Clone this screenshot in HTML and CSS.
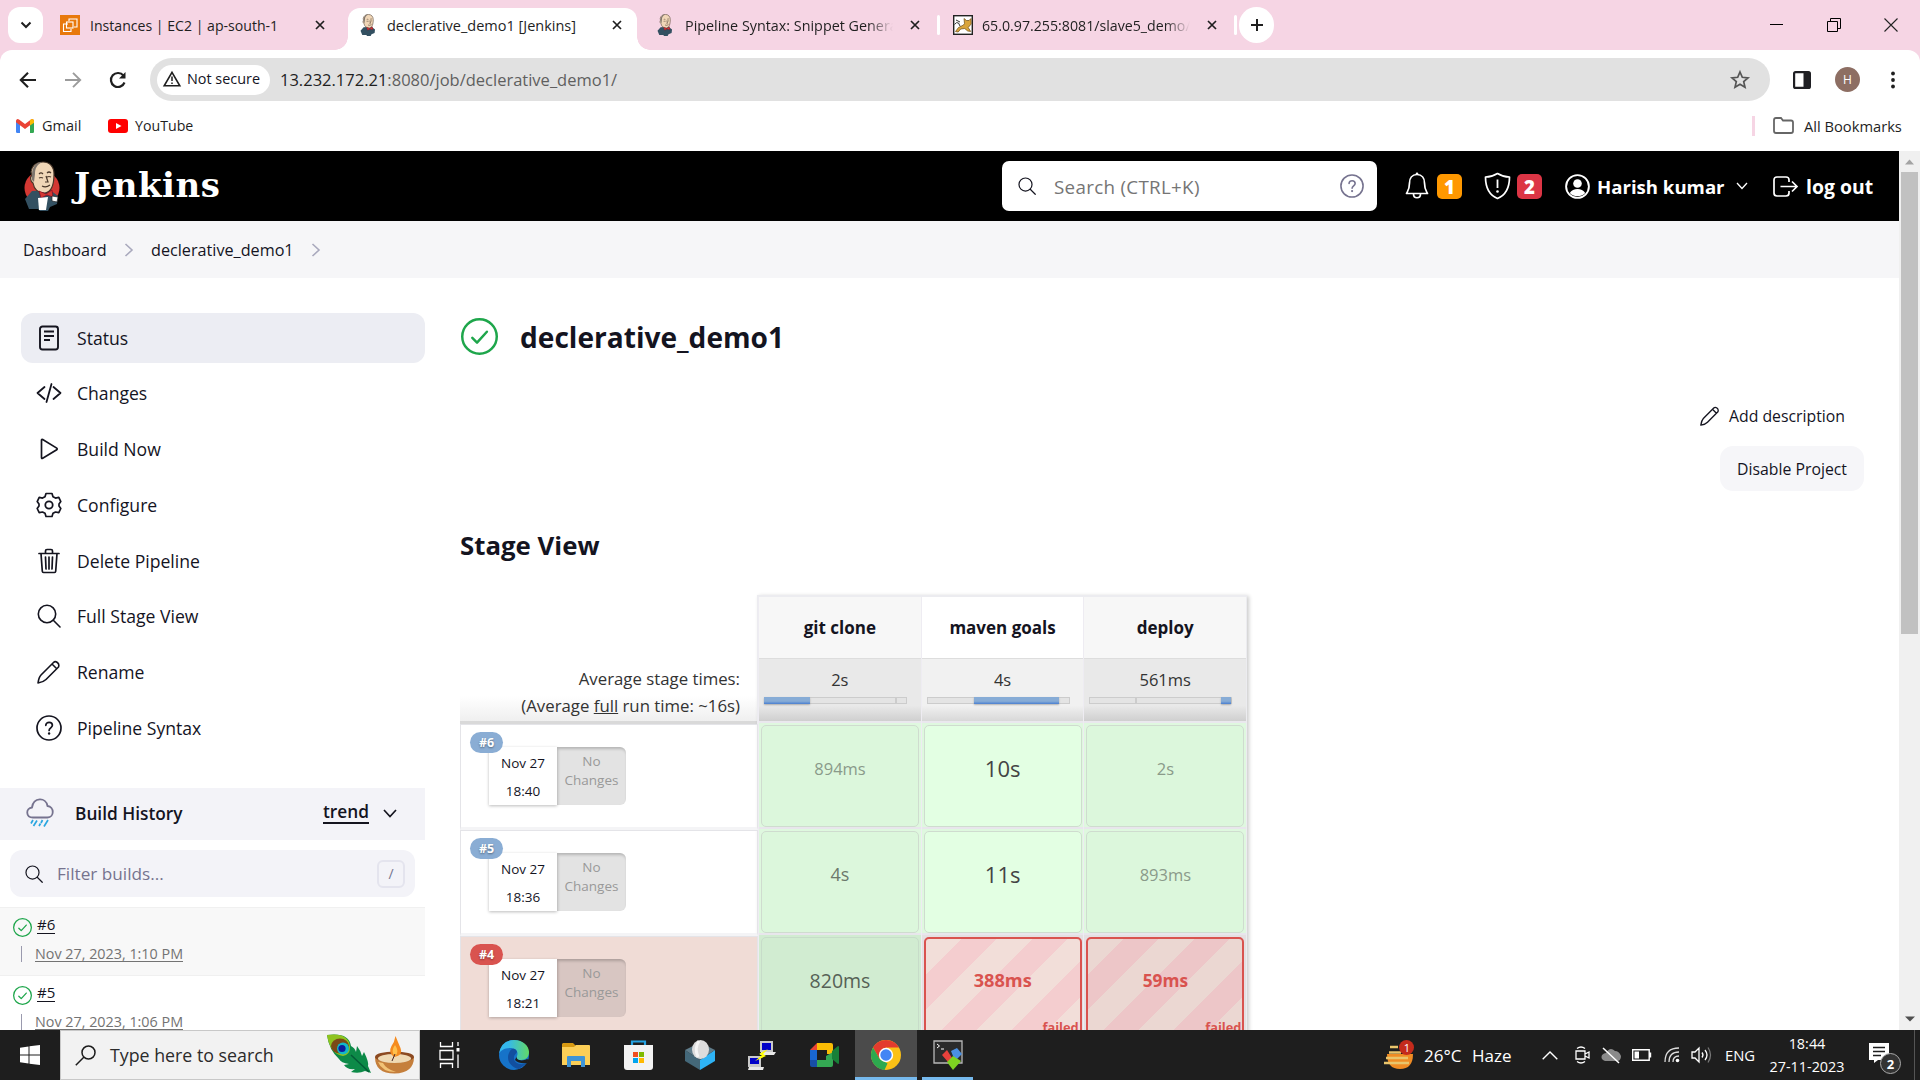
FILE: index.html
```html
<!DOCTYPE html>
<html lang="en">
<head>
<meta charset="utf-8">
<title>declerative_demo1 [Jenkins]</title>
<link rel="stylesheet" href="styles.css">
</head>
<body>
<svg class="defs" width="0" height="0">
  <defs>
    <symbol id="x" viewBox="0 0 10 10"><path d="M1 1l8 8M9 1l-8 8" fill="none" stroke="#1f1f1f" stroke-width="1.7"/></symbol>
    <symbol id="butler" viewBox="0 0 36 50">
      <path d="M8 30L1 38l4 10h9l2 2h8l2-4 7-3 1-8-8-6z" fill="#335061"/>
      <path d="M7 11C8 4 13 1 19 1c7 0 11 5 11 12 0 9-2 18-9 19-7 0-11-4-12-10-3-2-3-6-1-8z" fill="#f0d6b7" stroke="#49372a" stroke-width="1.2"/>
      <path d="M8 14C8 5 13 1 18 1c-5 3-7 6-7 12l-1 8-2-2z" fill="#7d756d"/>
      <path d="M15 13q2-2 4 0M23 12q2-2 4 0M15 17q2-1 4 0M23 16q2-1 4 0M22 15l2 6h-3M18 25q4 2 8-1" fill="none" stroke="#49372a" stroke-width="1.2"/>
      <path d="M15 30l7 3 6-4 1 7-6-2-6 3z" fill="#d33833" stroke="#81001c" stroke-width=".6"/>
    </symbol>
    <symbol id="check" viewBox="0 0 36 36"><circle cx="18" cy="18" r="16.8" fill="none" stroke="#1ea64b" stroke-width="2.4"/><path d="M11 19.300l4.600 4.700 9.600-10.600" fill="none" stroke="#1ea64b" stroke-width="2.400" stroke-linecap="round" stroke-linejoin="round"/></symbol>
    <symbol id="search" viewBox="0 0 24 24"><circle cx="10" cy="10" r="8.700" fill="none" stroke="#14141f" stroke-width="1.600"/><path d="M16.300 16.300L23 23" stroke="#14141f" stroke-width="1.600" stroke-linecap="round"/></symbol>
    <symbol id="pencil" viewBox="0 0 24 24"><path d="M1 23c.5-3.500 1-6 3-8L16.500 2.500c2-2 6.500.5 5 4.500L9 19.500c-2 2-4.500 3-8 3.500zM15 4l5 5" fill="none" stroke="#14141f" stroke-width="1.600" stroke-linejoin="round"/></symbol>
    <symbol id="help" viewBox="0 0 26 26"><circle cx="13" cy="13" r="12" fill="none" stroke="currentColor" stroke-width="1.700"/><path d="M9.800 10.300c0-4 6.600-4 6.600 0 0 2.400-3.300 2.700-3.300 5.100" fill="none" stroke="currentColor" stroke-width="1.700" stroke-linecap="round"/><circle cx="13.100" cy="18.500" r="1.200" fill="currentColor"/></symbol>
    <symbol id="chev" viewBox="0 0 10 14"><path d="M1.500 1l6.500 6-6.500 6" fill="none" stroke="#a9a9bd" stroke-width="1.600"/></symbol>
  </defs>
</svg>

<header class="tabs">
  <div class="tab-search"><svg width="12" height="8" viewBox="0 0 12 8"><path d="M1.500 1.500L6 6l4.500-4.500" fill="none" stroke="#1f1f1f" stroke-width="2"/></svg></div>
  <div class="tab tab-ec2">
    <svg width="20" height="20" viewBox="0 0 20 20"><rect width="20" height="20" fill="#e8790c"/><g fill="none" stroke="#fff" stroke-width="1.100"><rect x="6.500" y="7" width="6.500" height="6"/><path d="M9 6V4h8v8h-3M8 9H3.500v7.500H11V14"/></g></svg>
    <span class="title">Instances | EC2 | ap-south-1</span><svg class="x"><use href="#x"/></svg>
  </div>
  <div class="tab tab-active">
    <svg width="20" height="22" class="fav"><use href="#butler"/></svg>
    <span class="title">declerative_demo1 [Jenkins]</span><svg class="x"><use href="#x"/></svg>
  </div>
  <div class="tab tab-syntax">
    <svg width="20" height="22" class="fav"><use href="#butler"/></svg>
    <span class="title fade">Pipeline Syntax: Snippet Generator</span><svg class="x"><use href="#x"/></svg>
  </div>
  <i class="sep"></i>
  <div class="tab tab-tomcat">
    <svg width="20" height="20" viewBox="0 0 20 20"><rect x=".7" y=".7" width="18.600" height="18.600" fill="#fff" stroke="#222" stroke-width="1.400"/><path d="M2.500 16.500l3-4 5-2.500 1-1.500-.5-5 2.500 2h2.500l2-2 .2 5.500-3 3.500 2.500 4-3-.5-3-2.500-4 .5-2.500 3z" fill="#d9a43b" stroke="#6a4a15" stroke-width=".7"/><path d="M1.500 9.500q2-3 4-1.500l1.500 3M3 5l4 2" fill="none" stroke="#333"/></svg>
    <span class="title fade">65.0.97.255:8081/slave5_demo/</span><svg class="x"><use href="#x"/></svg>
  </div>
  <i class="sep"></i>
  <div class="new-tab"><svg width="14" height="14" viewBox="0 0 14 14"><path d="M7 1v12M1 7h12" stroke="#1f1f1f" stroke-width="2"/></svg></div>
  <div class="win">
    <svg width="14" height="14" viewBox="0 0 14 14"><path d="M0 6.500h13" stroke="#000" stroke-width="1"/></svg>
    <svg width="14" height="14" viewBox="0 0 14 14"><path d="M.5 3.500h10v10H.5zM3.500 3V.5h10v10H11" fill="none" stroke="#000"/></svg>
    <svg width="14" height="14" viewBox="0 0 14 14"><path d="M.5.500l13 13M13.500.500l-13 13" stroke="#222" stroke-width="1.100"/></svg>
  </div>
</header>

<div class="chrome">
  <div class="toolbar">
    <svg class="nav-i" viewBox="0 0 18 18"><path d="M17 9H2.500M9 1.800L1.800 9 9 16.200" fill="none" stroke="#1f1f1f" stroke-width="2.100"/></svg>
    <svg class="nav-i" viewBox="0 0 18 18"><path d="M1 9h14.500M9 1.800L16.200 9 9 16.200" fill="none" stroke="#9b9b9b" stroke-width="1.900"/></svg>
    <svg class="nav-i" viewBox="0 0 18 18"><path d="M15.500 11.500A7 7 0 1 1 14.500 4.700" fill="none" stroke="#1f1f1f" stroke-width="2.200"/><path d="M16.500 1v6.500H10z" fill="#1f1f1f"/></svg>
    <div class="omni">
      <div class="chip"><svg width="18" height="16" viewBox="0 0 18 16"><path d="M9 1.300L16.800 14.800H1.200z" fill="none" stroke="#1f1f1f" stroke-width="1.600"/><path d="M9 5.500v4.500M9 11.500V13" stroke="#1f1f1f" stroke-width="1.500"/></svg><span>Not secure</span></div>
      <span class="url">13.232.172.21<em>:8080/job/declerative_demo1/</em></span>
      <svg class="star" width="20" height="20" viewBox="0 0 20 20"><path d="M10 2l2.300 5.300 5.700.5-4.300 3.800 1.300 5.700-5-3-5 3 1.300-5.700L2 7.800l5.700-.5z" fill="none" stroke="#555" stroke-width="1.700"/></svg>
    </div>
    <svg class="panel" width="18" height="18" viewBox="0 0 18 18"><rect x="1.100" y="1.100" width="15.800" height="15.800" rx="1.500" fill="none" stroke="#1f1f23" stroke-width="2.200"/><path d="M10.500 1h6v16h-6z" fill="#1f1f23"/></svg>
    <div class="avatar">H</div>
    <svg width="4" height="18" viewBox="0 0 4 18"><g fill="#1f1f1f"><circle cx="2" cy="2.500" r="1.900"/><circle cx="2" cy="9" r="1.900"/><circle cx="2" cy="15.500" r="1.900"/></g></svg>
  </div>
  <div class="bookmarks">
    <svg width="18" height="14" viewBox="0 0 18 14"><path d="M0 1.500h4V14H1.200Q0 14 0 12.800z" fill="#4285f4"/><path d="M14 1.500h4v11.300q0 1.200-1.200 1.200H14z" fill="#34a853"/><path d="M0 2Q.5-.8 3 .4l6 4.700 6-4.700Q17.500-.8 18 2v1.300L9 10 0 3.300z" fill="#ea4335"/><path d="M14 1.200Q17 -1.500 18 1.700v2L14 6.500z" fill="#fbbc04"/></svg>
    <span class="gmail">Gmail</span>
    <svg width="20" height="14" viewBox="0 0 20 14"><rect width="20" height="14" rx="3" fill="#f00"/><path d="M8 4l5.500 3L8 10z" fill="#fff"/></svg>
    <span class="yt">YouTube</span>
    <i class="bm-sep"></i>
    <svg width="21" height="17" viewBox="0 0 21 17"><path d="M1 3Q1 1 3 1h5l2 2.500h8q2 0 2 2V14q0 2-2 2H3q-2 0-2-2z" fill="none" stroke="#666" stroke-width="1.800"/></svg>
    <span class="all">All Bookmarks</span>
  </div>
</div>

<div class="view">
 <div class="page">
  <div class="jhead">
    <svg class="logo" width="36" height="50" viewBox="0 0 36 50"><ellipse cx="18" cy="27" rx="17.500" ry="17" fill="#d33833"/><use href="#butler" width="36" height="50"/><path d="M14 37l10-1-2 13h-7z" fill="#fff"/><path d="M28 35l6 1-1 5-5-1z" fill="#fff" stroke="#222" stroke-width=".7"/></svg>
    <span class="brand">Jenkins</span>
    <div class="jsearch"><svg width="18" height="18"><use href="#search"/></svg><span>Search (CTRL+K)</span><svg class="h" width="24" height="24"><use href="#help"/></svg></div>
    <svg class="bell" width="24" height="28" viewBox="0 0 24 28"><path d="M12 2.500c-5 0-7.500 4-7.500 8.500 0 6-1.500 7.500-3 10.500h21c-1.500-3-3-4.500-3-10.500 0-4.500-2.500-8.500-7.500-8.500zM8.500 22c0 5 7 5 7 0" fill="none" stroke="#fff" stroke-width="1.700" stroke-linejoin="round"/><circle cx="12" cy="1.800" r="1.300" fill="#fff"/></svg>
    <b class="badge orange">1</b>
    <svg class="shield" width="27" height="28" viewBox="0 0 27 28"><path d="M13.500 1.500c4 2.500 7 3.500 12 3.500C25.500 16 22 23 13.500 26.500 5 23 1.500 16 1.500 5c5 0 8-1 12-3.500z" fill="none" stroke="#fff" stroke-width="1.700" stroke-linejoin="round"/><path d="M13.500 7.500V16" stroke="#fff" stroke-width="1.800"/><circle cx="13.500" cy="19.500" r="1.300" fill="#fff"/></svg>
    <b class="badge red">2</b>
    <svg class="user" width="25" height="25" viewBox="0 0 25 25"><circle cx="12.500" cy="12.500" r="11.400" fill="none" stroke="#fff" stroke-width="1.900"/><circle cx="12.500" cy="9.500" r="4.300" fill="#fff"/><path d="M4.800 19c3-5.500 12.400-5.500 15.400 0-4 4.300-11.400 4.300-15.400 0z" fill="#fff"/></svg>
    <span class="uname">Harish kumar</span>
    <svg class="caret" width="12" height="8" viewBox="0 0 12 8"><path d="M1 1l5 5.500L11 1" fill="none" stroke="#fff" stroke-width="1.300"/></svg>
    <svg class="out" width="25" height="21" viewBox="0 0 25 21"><path d="M16 6V4q0-3-3-3H4Q1 1 1 4v13q0 3 3 3h9q3 0 3-3v-2M7.500 10.500H24M19 5.500l5 5-5 5" fill="none" stroke="#fff" stroke-width="1.700"/></svg>
    <span class="lo">log out</span>
  </div>
  <nav class="crumbs"><span class="c1">Dashboard</span><svg width="10" height="14"><use href="#chev"/></svg><span class="c2">declerative_demo1</span><svg width="10" height="14"><use href="#chev"/></svg></nav>

  <div class="cols">
   <aside>
    <ul class="tasks">
      <li class="on"><svg viewBox="0 0 26 26"><rect x="4" y="1.500" width="18" height="23" rx="2.500" fill="none" stroke="#14141f" stroke-width="1.900"/><path d="M8 6.500h10M8 11h10M8 15h6" stroke="#14141f" stroke-width="1.900"/></svg>Status</li>
      <li><svg viewBox="0 0 26 26"><path d="M8.500 7L1.500 13l7 6M17.500 7l7 6-7 6M15.500 4l-5 18" fill="none" stroke="#14141f" stroke-width="1.800" stroke-linecap="round" stroke-linejoin="round"/></svg>Changes</li>
      <li><svg viewBox="0 0 26 26"><path d="M5.500 4.200q0-1.300 1.200-.7l14 8.600q1 .9 0 1.700l-14 8.500q-1.200.6-1.200-.7z" fill="none" stroke="#14141f" stroke-width="1.700"/></svg>Build Now</li>
      <li><svg viewBox="0 0 26 26"><path d="M10 1.500h6l1 3.200 2.500 1.400 3.300-.7 2 4.200L23 12v2l1.800 2.500-2 4.200-3.300-.7L17 21.300l-1 3.200h-6l-1-3.200L6.500 20l-3.300.7-2-4.200L3 14v-2L1.200 9.600l2-4.200 3.300.7L9 4.700z" fill="none" stroke="#14141f" stroke-width="1.700" stroke-linejoin="round"/><circle cx="13" cy="13" r="3.700" fill="none" stroke="#14141f" stroke-width="1.800"/></svg>Configure</li>
      <li><svg viewBox="0 0 26 26"><path d="M3 5.500h20M5 5.500l1.300 17.800q.1 1.200 1.200 1.200h11q1.100 0 1.200-1.200L21 5.500M9.500 5V3q0-1.500 1.500-1.500h4q1.500 0 1.500 1.500v2M9.500 9l.5 12M13 9v12M16.500 9L16 21" fill="none" stroke="#14141f" stroke-width="1.700" stroke-linecap="round"/></svg>Delete Pipeline</li>
      <li><svg viewBox="-1 -1 26 26"><use href="#search" width="24" height="24"/></svg>Full Stage View</li>
      <li><svg viewBox="-1 -1 26 26"><use href="#pencil" width="24" height="24"/></svg>Rename</li>
      <li><svg viewBox="0 0 26 26"><use href="#help"/></svg>Pipeline Syntax</li>
    </ul>
    <div class="bh">
      <svg width="28" height="30" viewBox="0 0 28 30"><path d="M7 19.500C-.5 19.500-.5 10 6 9.500 7.500-1 20-1 21.500 8c7 .5 7 11.500 0 11.500z" fill="none" stroke="#76738f" stroke-width="1.800"/><path d="M7 22l-2 3.500M11 22.500L7.500 28M16.500 22l-1.500 3M14.500 25.500L13 28M22 22l-4 6.500" stroke="#2ba6e0" stroke-width="1.700"/></svg>
      <b>Build History</b><b class="trend">trend</b>
      <svg width="14" height="9" viewBox="0 0 14 9"><path d="M1 1l6 6.500L13 1" fill="none" stroke="#14141f" stroke-width="1.700"/></svg>
    </div>
    <div class="filter"><svg width="18" height="18"><use href="#search"/></svg><span>Filter builds...</span><kbd>/</kbd></div>
    <div class="build first"><div class="l1"><svg width="19" height="19"><use href="#check"/></svg><u>#6</u></div><div class="l2"><i></i><u>Nov 27, 2023, 1:10 PM</u></div></div>
    <div class="build"><div class="l1"><svg width="19" height="19"><use href="#check"/></svg><u>#5</u></div><div class="l2"><i></i><u>Nov 27, 2023, 1:06 PM</u></div></div>
   </aside>

   <main>
    <h1><svg width="37" height="37"><use href="#check"/></svg><span>declerative_demo1</span></h1>
    <div class="actions">
      <div class="desc"><svg width="20" height="20"><use href="#pencil"/></svg><span>Add description</span></div>
      <div class="disable">Disable Project</div>
    </div>
    <h2>Stage View</h2>
    <div class="stage">
      <div class="runs">
        <div class="avg"><p>Average stage times:</p><p>(Average <u>full</u> run time: ~16s)</p></div>
        <div class="run"><b>#6</b><div class="when"><span>Nov 27</span><span>18:40</span></div><div class="nc">No<br>Changes</div></div>
        <div class="run"><b>#5</b><div class="when"><span>Nov 27</span><span>18:36</span></div><div class="nc">No<br>Changes</div></div>
        <div class="run bad"><b>#4</b><div class="when"><span>Nov 27</span><span>18:21</span></div><div class="nc">No<br>Changes</div></div>
      </div>
      <div class="grid">
        <div class="col shade">
          <div class="th">git clone</div>
          <div class="tot"><span>2s</span><div class="bar"><i style="width:46px"></i><s style="margin-left:85px"></s></div></div>
          <div class="cell"><div class="card t1">894ms</div></div>
          <div class="cell"><div class="card t2">4s</div></div>
          <div class="cell dim"><div class="card t3">820ms</div></div>
        </div>
        <div class="col">
          <div class="th">maven goals</div>
          <div class="tot"><span>4s</span><div class="bar"><i style="margin-left:46px;width:85px"></i></div></div>
          <div class="cell"><div class="card t4">10s</div></div>
          <div class="cell"><div class="card t4">11s</div></div>
          <div class="cell dim"><div class="card fail">388ms<em>failed</em></div></div>
        </div>
        <div class="col shade">
          <div class="th">deploy</div>
          <div class="tot"><span>561ms</span><div class="bar"><s style="margin-left:45px"></s><i style="margin-left:84px;width:12px"></i></div></div>
          <div class="cell"><div class="card t1">2s</div></div>
          <div class="cell"><div class="card t1">893ms</div></div>
          <div class="cell dim"><div class="card fail">59ms<em>failed</em></div></div>
        </div>
      </div>
    </div>
   </main>
  </div>
 </div>
 <div class="scroll"><svg width="9" height="6" viewBox="0 0 9 6"><path d="M4.500.500L9 5.500H0z" fill="#a3a3a3"/></svg><i></i><svg width="10" height="6" viewBox="0 0 10 6"><path d="M5 5.500L0 .5h10z" fill="#505050"/></svg></div>
</div>

<footer class="bar-os">
  <div class="start"><svg width="20" height="20" viewBox="0 0 20 20"><path d="M0 2.800L8.500 1.500v8H0zM9.500 1.300L20 0v9.500H9.500zM0 10.500h8.500v8L0 17.300zM9.500 10.500H20V20L9.500 18.700z" fill="#fff"/></svg></div>
  <div class="os-search"><svg width="21" height="21" viewBox="0 0 21 21"><circle cx="13.500" cy="7.500" r="6.500" fill="none" stroke="#1c1c1c" stroke-width="1.500"/><path d="M9 12L.8 20.200" stroke="#1c1c1c" stroke-width="1.500"/></svg><span>Type here to search</span>
    <svg class="feather" width="44" height="39" viewBox="0 0 44 39"><path d="M0 0Q22-3 24 11q4 2 5 6l1-6q4 5 5 10l2-4q5 10 4 14l3 7-6-2q-6 3-14 1l4-3q-8 1-11-4l5-1q-8-1-10-5Q2 15 0 0z" fill="#0d8a48"/><path d="M0 0Q22-3 23 12q0 8-7 9Q3 19 0 0z" fill="#8fc31f"/><ellipse cx="13" cy="11" rx="9" ry="7.500" fill="#7a4a16"/><circle cx="16" cy="13.500" r="6" fill="#12b8c8"/><circle cx="15" cy="13.500" r="3.600" fill="#0b1d9c"/><path d="M24 20l18 17" stroke="#045b37" stroke-width="1.500"/></svg>
    <svg width="39" height="38" viewBox="0 0 39 38"><path d="M0 21q0 16.500 19.500 16.500Q39 37 39 21z" fill="#c57f3c"/><path d="M3 26q4 10 18 10-10-3-13-9z" fill="#f2c377"/><ellipse cx="19.500" cy="21" rx="19.500" ry="5.500" fill="#8c4a22"/><ellipse cx="19.500" cy="22.500" rx="16.500" ry="4.500" fill="#efd9b4"/><path d="M20.500 0q-1 6-4 10-4 7 3 11 9-2 6-9-3-7-5-12z" fill="#f58b1f"/><path d="M20 9q-5 7 0 11 5-4 0-11z" fill="#ffc04d"/><path d="M20 18l-3 7" stroke="#422"/></svg>
  </div>
  <div class="apps">
    <div><svg width="21" height="26" viewBox="0 0 21 26"><path d="M1.500 0v4.500h12V0M1.500 26v-4.500h12V26M1 8.500h13v9H1zM19 0v4M19 12.500V26" fill="none" stroke="#fff" stroke-width="1.300"/><path d="M17.500 6h3v3.500h-3z" fill="#fff"/></svg></div>
    <div><svg width="30" height="30" viewBox="0 0 30 30"><defs><linearGradient id="eg"><stop offset=".3" stop-color="#34b8ee"/><stop offset="1" stop-color="#62d966"/></linearGradient></defs><circle cx="15" cy="15" r="15" fill="#1673c9"/><path d="M0 14Q2 0 15 0c9 0 15 6 15 12 0 5-3 8-8 8-4 0-5-2-4-4 2-5-2-8-7-8-6 0-10 3-11 6z" fill="url(#eg)"/><path d="M11 11c-5 8 0 16 9 18l8-6c-7 3-14 0-13-6 0-2 2-3 3-5-1-4-5-4-7-1z" fill="#124f9f"/><path d="M18 16c-2 4 5 6 10 3l2 1-2 3q-8 1-12-3z" fill="#1e1e1e"/></svg></div>
    <div><svg width="28" height="24" viewBox="0 0 28 24"><path d="M1 0h10l3 3v4H0V1z" fill="#d89a12"/><path d="M0 4h12l2-2h13q1 0 1 1v19H0z" fill="#fccf57"/><path d="M5 24V14q0-1 1-1h16q1 0 1 1v10h-4v-6H9v6z" fill="#3f94d6"/></svg></div>
    <div><svg width="29" height="30" viewBox="0 0 29 30"><path d="M8 7V1.500h13V7" fill="none" stroke="#24a3e3" stroke-width="2.200"/><path d="M0 5h29v22q0 3-3 3H3q-3 0-3-3z" fill="#f3f3f3"/><path d="M9 12h5v5H9z" fill="#f25022"/><path d="M15 12h5v5h-5z" fill="#7fba00"/><path d="M9 18h5v5H9z" fill="#00a4ef"/><path d="M15 18h5v5h-5z" fill="#ffb900"/></svg></div>
    <div><svg width="30" height="30" viewBox="0 0 30 30"><path d="M0 10l15 10v10L0 21z" fill="#446879"/><path d="M30 10L15 20v10l15-9z" fill="#2eb3f5"/><path d="M0 10l8-4h14l8 4-15 10z" fill="#607d8b"/><ellipse cx="15.500" cy="9.500" rx="8.500" ry="9.500" fill="#dcdcdc"/><path d="M14 1q-5 7-1 16" fill="none" stroke="#f5f5f5" stroke-width="3"/></svg></div>
    <div><svg width="28" height="30" viewBox="0 0 28 30"><path d="M12 1h13v11H12zM0 16h13v11H0z" fill="#c9c9c9"/><path d="M14 3h9v7h-9zM2 18h9v6H2z" fill="#0000c8"/><path d="M13 12h15l-2 3H12zM1 27h15l-1 3H0z" fill="#e8e8e8"/><path d="M20 9l-9 5 3 1-7 6 11-5-3-2z" fill="#ff0"/></svg></div>
    <div><svg width="29" height="24" viewBox="0 0 29 24"><path d="M7 0h14q2 0 2 2v9h-6V7H7z" fill="#fbbc04"/><path d="M0 7l7-7v7z" fill="#ea4335"/><path d="M0 7h7v10H0z" fill="#1967d2"/><path d="M0 17h7v7H2q-2 0-2-2z" fill="#174ea6"/><path d="M7 17h9v-4l7-4v13q0 2-2 2H7z" fill="#34a853"/><path d="M22 8l6-5q1 0 1 1v16q0 1-1 1l-6-5z" fill="#188038"/></svg></div>
    <div class="act"><svg width="30" height="30" viewBox="0 0 30 30"><circle cx="15" cy="15" r="15" fill="#fbc116"/><path d="M2 7.500A15 15 0 0 1 28 7.500H15L8.500 19z" fill="#e33b2e"/><path d="M2 7.500l6.500 11.200 6.500 3.800 1.500 1L13.500 30A15 15 0 0 1 2 7.500z" fill="#2da94f"/><circle cx="15" cy="15" r="7.200" fill="#fff"/><circle cx="15" cy="15" r="5.700" fill="#4285f4"/></svg></div>
    <div class="run-app"><svg width="30" height="30" viewBox="0 0 30 30"><path d="M1 1h28v22H1z" fill="#2b2b2b" stroke="#b8b8b8" stroke-width="1.300"/><path d="M4 4l2.500 2L4 8M8 9h3" fill="none" stroke="#fff"/><path d="M9 15l5-5 5 8-4 4z" fill="#e8413c"/><path d="M18 11l6-3 5 6-6 6-3-4z" fill="#4a90e2"/><path d="M14 22l6-6 8 5-8 9z" fill="#7ed321"/></svg></div>
  </div>
  <div class="tray">
    <div class="weather"><svg width="30" height="30" viewBox="0 0 30 30"><path d="M3 14h26q0 15-13 15T3 14z" fill="#f08c24"/><path d="M6 7h8M5 12.500h12M2 18h22M0 23h25" stroke="#e9c56c" stroke-width="2.600"/><circle cx="22.500" cy="7.500" r="7.500" fill="#c42b1c"/></svg><sup>1</sup></div>
    <span class="temp">26°C</span><span class="haze">Haze</span>
    <svg class="up" width="16" height="9" viewBox="0 0 16 9"><path d="M.7 8.300L8 1l7.300 7.300" fill="none" stroke="#fff" stroke-width="1.400"/></svg>
    <svg class="cam" width="15" height="18" viewBox="0 0 15 18"><path d="M1 5h9v8H1zM10 8l4-2v6l-4-2M2 2.500q4-3 8 0M2 15.500q4 3 8 0" fill="none" stroke="#fff" stroke-width="1.300"/></svg>
    <svg class="cloud" width="20" height="16" viewBox="0 0 20 16"><path d="M4 14q-5-2-3-6 2-2 4-2Q9-1 14 4q4 0 6 5 0 5-4 5z" fill="#8a8a8a"/><path d="M2 1l16 15" stroke="#fff" stroke-width="1.500"/></svg>
    <svg class="bat" width="20" height="12" viewBox="0 0 20 12"><path d="M.7.700h16.500v10.600H.7zM18.500 3.500v5" fill="none" stroke="#fff" stroke-width="1.400"/><path d="M2.500 2.500H7v7H2.500z" fill="#fff"/></svg>
    <svg class="wifi" width="16" height="16" viewBox="0 0 16 16"><path d="M1 15Q1 1 15 1M5 15Q5 5 15 5M9 15q0-6 6-6" fill="none" stroke="#ddd" stroke-width="1.300"/><circle cx="13.500" cy="13.500" r="1.800" fill="#fff"/></svg>
    <svg class="spk" width="21" height="18" viewBox="0 0 21 18"><path d="M1 6h3l4-4v14l-4-4H1zM11 6.500q2 2.500 0 5M14 4q4 5 0 10" fill="none" stroke="#fff" stroke-width="1.300"/><path d="M17 1.500q5 7.500 0 15" fill="none" stroke="#777" stroke-width="1.300"/></svg>
    <span class="eng">ENG</span>
    <div class="clock"><span>18:44</span><span>27-11-2023</span></div>
    <div class="note"><svg width="20" height="20" viewBox="0 0 20 20"><path d="M0 0h20v17H9l-4 3v-3H0z" fill="#fff"/><path d="M4 4.500h12M4 8.500h12M4 12.500h8" stroke="#1e1e1e" stroke-width="1.300"/></svg><b>2</b></div>
    <i class="peek"></i>
  </div>
</footer>
</body>
</html>
```
FILE: styles.css
```css
* { box-sizing: border-box; }
body { margin: 0; width: 1920px; height: 1080px; overflow: hidden; display: flex; flex-direction: column; background: #fff; color: #14141f; font-family: "Open Sans", "Noto Sans", sans-serif; font-size: 16px; }
svg { flex: none; display: block; overflow: visible; }
span, b, u { white-space: nowrap; }
em { font-style: normal; }
p, h1, h2, ul { margin: 0; padding: 0; }
.defs { position: absolute; }

/* browser tabs */
.tabs { height: 50px; flex: none; background: #f6d5e4; display: flex; align-items: center; padding-left: 8px; font-size: 14.2px; color: #1f1f1f; }
.tab-search { width: 35px; height: 36px; border-radius: 12px; background: #fff; display: grid; place-items: center; }
.tab { display: flex; align-items: center; height: 42px; align-self: flex-end; padding-bottom: 8px; }
.tab .title { width: 208px; margin-left: 10px; overflow: hidden; }
.tab .x { width: 10px; height: 10px; }
.fade { -webkit-mask-image: linear-gradient(90deg, #000 88%, transparent); mask-image: linear-gradient(90deg, #000 88%, transparent); }
.tab-ec2 { margin-left: 17px; width: 288px; }
.tab-ec2 .title { width: 225px; font-size: 14.1px; }
.tab-active { width: 289px; background: #fff; border-radius: 12px 12px 0 0; padding-left: 10px; position: relative; }
.tab-active::before, .tab-active::after { content: ""; position: absolute; bottom: 0; width: 13px; height: 13px; }
.tab-active::before { left: -13px; background: radial-gradient(circle at 0 0, transparent 12.5px, #fff 13px); }
.tab-active::after { right: -13px; background: radial-gradient(circle at 100% 0, transparent 12.5px, #fff 13px); }
.tab-active .title { width: 225px; font-size: 14.5px; margin-left: 9px; }
.tab-syntax { margin-left: 18px; width: 282px; }
.tab-syntax .title { font-size: 14.35px; }
.tab-syntax .x, .tab-tomcat .x { margin-left: 17px; }
.tab-tomcat { margin-left: 13px; width: 281px; }
.tab-tomcat .title { margin-left: 9px; }
.tabs .sep { width: 3px; height: 20px; background: #fff; border-radius: 2px; }
.new-tab { width: 35px; height: 36px; border-radius: 18px; background: #fff; margin-left: 2px; display: grid; place-items: center; }
.win { margin-left: auto; display: flex; gap: 43px; margin-right: 22px; }

/* toolbar */
.chrome { height: 101px; flex: none; background: linear-gradient(#f6d5e4 12px, #fff 12px); }
.toolbar { height: 59px; display: flex; align-items: center; background: #fff; border-radius: 12px 12px 0 0; padding-left: 19px; }
.nav-i { width: 18px; height: 18px; margin-right: 27px; }
.toolbar .nav-i:nth-child(3) { margin-right: 23px; }
.omni { width: 1620px; height: 43px; border-radius: 22px; background: #e1e1e1; display: flex; align-items: center; padding-left: 7px; }
.chip { width: 113px; height: 30px; background: #fff; border-radius: 15px; display: flex; align-items: center; padding: 0 0 2px 6px; gap: 6px; font-size: 14.4px; }
.url { margin-left: 10px; font-size: 16.5px; color: #1f1f1f; }
.url em { color: #5f5f5f; }
.star { margin-left: auto; margin-right: 20px; }
.panel { margin-left: 23px; }
.avatar { width: 25px; height: 25px; border-radius: 50%; background: #8d6e63; color: #fff; font-size: 12px; display: grid; place-items: center; margin: 0 31px 0 24px; }
.bookmarks { height: 33px; display: flex; align-items: center; padding-left: 16px; font-size: 14.2px; color: #1f1f1f; }
.gmail { width: 64px; margin-left: 8px; margin-right: 2px; font-size: 14.5px; }
.yt { margin-left: 7px; }
.bm-sep { width: 3px; height: 20px; background: #f6d5e4; margin-left: auto; margin-right: 18px; }
.all { width: 98px; margin: 0 18px 0 10px; font-size: 14.7px; }

/* page viewport */
.view { height: 879px; flex: none; display: flex; overflow: hidden; }
.page { width: 1899px; height: 879px; overflow: hidden; }
.scroll { width: 21px; background: #f0f0f0; display: flex; flex-direction: column; align-items: center; padding: 8px 0; }
.scroll i { width: 17px; height: 462px; background: #c1c1c1; margin: 7px 0 auto; }

/* jenkins header */
.jhead { height: 70px; background: #000; color: #fff; display: flex; align-items: center; padding-left: 24px; font-weight: 700; font-size: 18.6px; }
.brand { font-family: "DejaVu Serif", serif; font-size: 34px; letter-spacing: .5px; margin-left: 14px; width: 928px; padding-bottom: 3px; }
.jsearch { width: 375px; height: 50px; background: #fff; border-radius: 7px; display: flex; align-items: center; padding: 0 13px 0 16px; color: #757575; font-weight: 400; font-size: 18.8px; letter-spacing: .3px; }
.jsearch span { margin-left: 18px; padding-top: 1px; }
.jsearch .h { margin-left: auto; color: #76738f; }
.bell { margin-left: 28px; }
.badge { width: 25px; height: 25px; border-radius: 5px; display: grid; place-items: center; margin-left: 8px; margin-right: 22px; }
.orange { background: #ff9800; }
.red { background: #dc3545; margin-left: 6px; margin-right: 23px; }
.uname { width: 131px; margin-left: 7px; }
.caret { margin: 0 25px 0 8px; }
.lo { margin-left: 8px; font-size: 19.400px; }

.crumbs { height: 57px; background: #f6f6f8; display: flex; align-items: center; padding-left: 23px; font-size: 16.2px; }
.c1 { width: 83px; margin-right: 18px; }
.c2 { width: 143px; margin: 0 17px; }

/* sidebar */
.cols { display: flex; }
aside { width: 425px; padding-top: 35px; }
.tasks { list-style: none; padding-left: 21px; height: 475px; font-size: 17.600px; display: flex; flex-direction: column; gap: 5.800px; }
.tasks li { height: 50px; border-radius: 12px; display: flex; align-items: center; padding: 0 0 1px 15px; gap: 15px; }
.tasks svg { width: 26px; height: 26px; }
.tasks .on { background: #ecedf3; }
.bh { height: 52px; background: #f3f3f8; display: flex; align-items: center; padding: 0 28px 2px 26px; font-size: 17.300px; }
.bh b { margin-left: 21px; font-weight: 600; }
.bh .trend { margin: 0 14px 0 auto; border-bottom: 2px solid; line-height: 20px; }
.filter { margin: 10px; height: 47px; border-radius: 12px; background: #f3f3f8; display: flex; align-items: center; padding: 0 10px 0 15px; color: #76738f; font-size: 17.2px; }
.filter span { margin-left: 14px; }
kbd { margin-left: auto; width: 28px; height: 28px; border: 2px solid #e4e4ee; border-radius: 6px; display: grid; place-items: center; font: 14px "Open Sans", sans-serif; }
.build { height: 68px; padding: 8px 0 0 13px; }
.build.first { height: 69px; background: #f8f8f8; border: solid #f0f0f0; border-width: 1px 0; }
.build u { text-decoration: none; border-bottom: 1px solid; }
.l1 { display: flex; gap: 5px; height: 20px; font-size: 15px; }
.l1 svg { margin-top: 2px; }
.l1 u { line-height: 16px; height: 18px; }
.l2 { display: flex; margin-top: 10px; padding-left: 8px; font-size: 14.350px; color: #737373; }
.l2 i { width: 1px; height: 16px; background: #9a9aae; margin-right: 13px; }
.l2 u { line-height: 15px; height: 16px; }

/* content */
main { width: 1474px; padding: 34px 35px 0 35px; }
h1 { display: flex; align-items: center; gap: 22px; height: 48px; font-size: 28.1px; line-height: 50px; padding-left: 1px; }
h1 span { padding-top: 2px; }
.actions { display: flex; flex-direction: column; align-items: flex-end; margin-top: 34px; height: 130px; font-size: 15.8px; }
.desc { height: 40px; display: flex; align-items: center; margin-right: 18px; gap: 9px; padding-top: 4px; }
.desc span { width: 117px; }
.disable { margin-top: 12px; width: 144px; height: 45px; border-radius: 13px; background: #f6f6f9; display: grid; place-items: center; }
h2 { font-size: 25.8px; line-height: 36px; height: 71px; padding-top: 3px; }

/* stage table */
.stage { display: flex; height: 500px; }
.runs { width: 298px; }
.avg { height: 129px; padding-top: 70px; text-align: right; padding-right: 18px; font-size: 16.8px; font-weight: 400; line-height: 27px; color: #333; border-bottom: 3px solid #d9d9d9; background: linear-gradient(transparent 80%, #efefef); }
.run { height: 106px; border: 1px solid #e4e4e8; border-bottom: 3px solid #f4f4f6; display: flex; padding: 22px 0 0 28px; position: relative; font-size: 13.5px; }
.run.bad { background: #f0dcd6; }
.run b { position: absolute; left: 9px; top: 7px; z-index: 1; width: 33px; height: 21px; border-radius: 10.500px; background: #8aadd4; color: #fff; display: grid; place-items: center; font-size: 12.5px; text-shadow: 0 1px 2px #0006; }
.run.bad b { background: #d9534f; }
.when { width: 68px; height: 58px; background: #fff; box-shadow: 0 1px 3px #0004; display: flex; flex-direction: column; align-items: center; line-height: 28px; padding-top: 2px; }
.nc { width: 69px; height: 58px; border-radius: 0 6px 6px 0; background: #e3e3e3; box-shadow: inset 1px 2px 3px #0003; color: #999; text-align: center; line-height: 19px; padding-top: 5px; }
.bad .nc { background: #d8c6c2; }
.grid { width: 490px; margin-left: -1px; display: flex; border: solid #ececf0; border-width: 2px 2px 0 1px; box-shadow: 2px 1px 4px #0003; }
.col { width: 162.700px; border-left: 1px solid #eeecf2; }
.th { height: 62px; display: grid; place-items: center; font-weight: 700; font-size: 17px; border-bottom: 1px solid #ddd; }
.tot { height: 64px; background: linear-gradient(#f1f1f1 75%, #d8d8d8); text-align: center; font-size: 16.5px; line-height: 41px; border-bottom: 2px solid #eae8ee; }
.tot span { display: block; height: 38px; color: #333; }
.bar { width: 143px; height: 7px; margin-left: 5px; display: flex; background: #e4e4e4; border: 1px solid #ccc; }
.bar i { height: 7px; margin-top: -1px; background: linear-gradient(#87acd6 60%, #4a7fd0); box-shadow: 0 1px 2px #0004; }
.bar i:first-child { margin-left: -1px; }
.bar s { width: 2px; height: 5px; background: #ccc; }
.cell { height: 106px; padding: 2px; background: #dff8df; border-bottom: 2px solid #e8e6ec; }
.card { height: 102px; width: 158px; border: 1px solid #cfdccf; border-radius: 5px; background: #e3ffe3; display: flex; align-items: center; justify-content: center; padding-bottom: 16px; position: relative; color: #444; }
.shade .th { background: #f7f7f7; }
.shade .tot { background: linear-gradient(#e9e9e9 75%, #cfcfcf); }
.shade .card { background: #dcf7dc; }
.t1 { font-size: 16.5px; color: #8a9a8a; }
.t2 { font-size: 18px; color: #6c786c; }
.shade .t3 { font-size: 19.5px; color: #566156; background: #d1ecd1; border-color: #c7dcc9; }
.t4 { font-size: 22px; }
.cell.dim { background: #e4e0e2; }
.shade .cell.dim:has(.t3) { background: #d1ecd1; }
.card.fail { border: 2px solid #d9534f; color: #d9534f; font-weight: 700; font-size: 18.2px; background: repeating-linear-gradient(135deg, #f2ded9 0 25px, #f4cdcf 25px 50px); }
.shade .card.fail { background: repeating-linear-gradient(135deg, #ebd7d2 0 25px, #edc6c8 25px 50px); font-size: 17.300px; }
.fail em { position: absolute; right: 1px; top: 79px; font-size: 12.8px; line-height: 18px; }

/* os taskbar */
.bar-os { height: 50px; flex: none; background: #1e1e1e; display: flex; color: #fff; }
.start { width: 60px; display: grid; place-items: center; }
.os-search { width: 360px; background: #f2f2f2; border: 1px solid #c8c8c8; color: #2b2b2b; display: flex; align-items: center; padding-left: 14px; font-size: 17.8px; }
.os-search span { width: 217px; margin-left: 14px; }
.feather { margin-right: 4px; margin-top: -2px; }
.apps { display: flex; }
.apps div { width: 62px; display: grid; place-items: center; }
.apps div:first-child { width: 63px; padding-right: 4px; }
.apps .act { background: #4b4b4b; border-bottom: 3px solid #76b9ed; padding-top: 3px; }
.apps .run-app { width: 51px; margin-left: 5px; border-bottom: 3px solid #76b9ed; padding-top: 3px; }
.tray { margin-left: auto; display: flex; align-items: center; font-size: 17px; padding-right: 5px; }
.weather { position: relative; }
.weather sup { position: absolute; right: 4px; top: 0; font-size: 11px; line-height: 15px; }
.temp { width: 39px; margin-left: 10px; margin-right: 9px; }
.haze { width: 39px; }
.up { margin-left: 31px; }
.cam { margin-left: 17px; }
.cloud { margin-left: 11px; }
.bat { margin-left: 11px; }
.wifi { margin-left: 12px; }
.spk { margin-left: 11px; }
.eng { width: 29px; margin-left: 13px; font-size: 14.8px; }
.clock { width: 78px; margin-left: 14px; display: flex; flex-direction: column; align-items: center; font-size: 14.4px; line-height: 23px; }
.note { margin-left: 23px; position: relative; width: 31px; height: 30px; margin-right: 14px; padding-top: 3px; }
.note b { position: absolute; right: -1px; bottom: -4px; width: 21px; height: 21px; border-radius: 50%; border: 1px solid #aaa; background: #333; font-size: 13px; display: grid; place-items: center; }
.peek { width: 1px; height: 50px; background: #555; }
```
